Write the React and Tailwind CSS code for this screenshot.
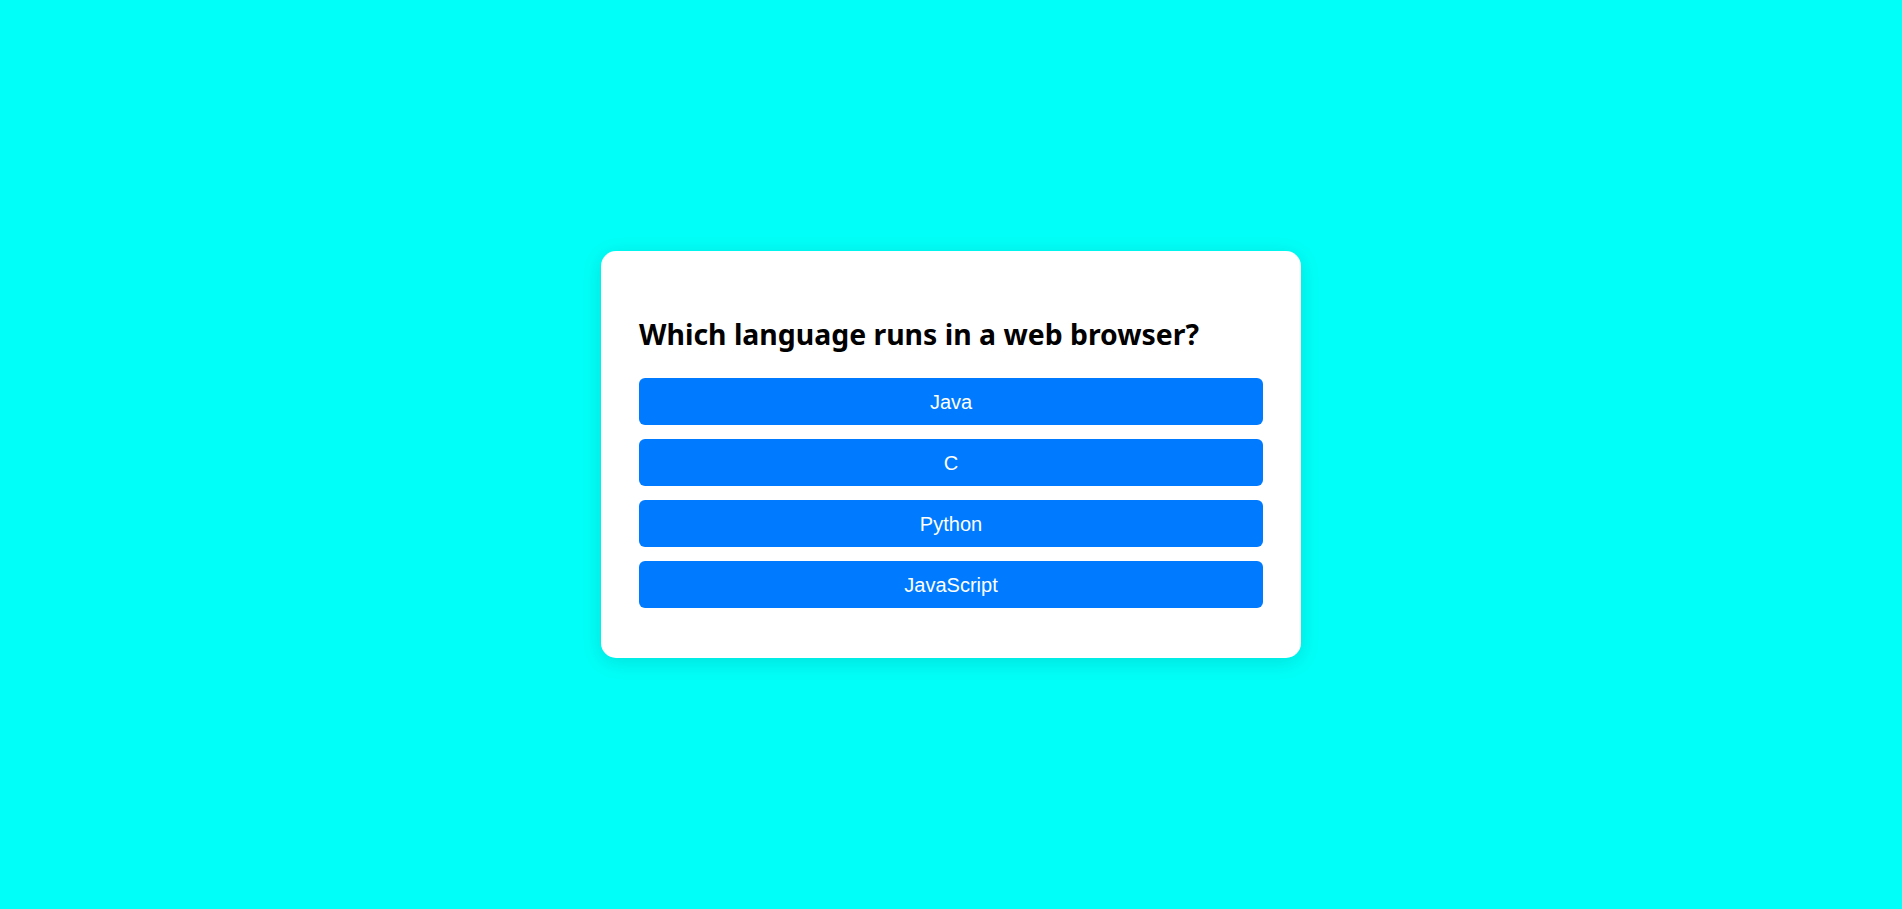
import React from "react";

const options = ["Java", "C", "Python", "JavaScript"];

const App = () => {
  return (
    <div className="min-h-screen w-full bg-[#00fff8] flex items-center justify-center">
      <div className="w-[700px] bg-white rounded-[15px] shadow-[0_4px_20px_rgba(0,0,0,0.12)] px-[38px] pt-[66px] pb-[50px]">
        <h2 className="font-['Noto_Sans',sans-serif] font-bold text-[28.4px] leading-[34px] text-black mb-[27px]">
          Which language runs in a web browser?
        </h2>
        <div className="flex flex-col gap-[14px]">
          {options.map((opt) => (
            <button
              key={opt}
              className="h-[47px] w-full bg-[#007bff] text-white rounded-[6px] font-['Liberation_Sans',Arial,sans-serif] text-[20px]"
            >
              {opt}
            </button>
          ))}
        </div>
      </div>
    </div>
  );
};

export default App;
